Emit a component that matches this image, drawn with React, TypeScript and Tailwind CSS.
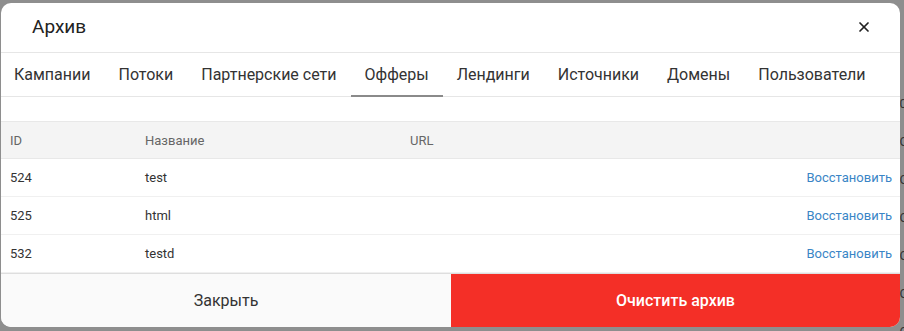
import { X } from "lucide-react";

const tabs = ["Кампании", "Потоки", "Партнерские сети", "Офферы", "Лендинги", "Источники", "Домены", "Пользователи"];

const rows = [
  { id: 524, name: "test" },
  { id: 525, name: "html" },
  { id: 532, name: "testd" },
];

export default function App() {
  return (
    <div
      className="relative w-[904px] h-[331px] overflow-hidden bg-[#8e8e8e] pt-[3px] pl-[1px]"
      style={{ fontFamily: "Roboto, 'Noto Sans', sans-serif" }}
    >
      {/* page behind the overlay, peeking out at the right edge */}
      <div className="absolute right-[-4px] top-[95px] flex flex-col gap-[20px] text-[13px] leading-[18px] text-[#333]">
        {["0", "C", "C", "C", "C", "C", "C"].map((c, i) => (
          <span key={i}>{c}</span>
        ))}
      </div>

      <div className="relative w-[899px] h-[324px] bg-white rounded-[10px] overflow-hidden flex flex-col">
        {/* Header */}
        <div className="h-[50px] flex items-center justify-between pl-[31px] pr-[28px] border-b border-[#e6e6e6]">
          <span className="text-[19px] text-[#222]">Архив</span>
          <X className="w-[16px] h-[16px] text-[#222]" strokeWidth={2.6} />
        </div>

        {/* Tabs */}
        <div className="h-[45px] flex border-b border-[#e6e6e6] -ml-px">
          {tabs.map((t) => (
            <div
              key={t}
              className={
                "px-[14px] pt-[1px] flex items-center text-[16px] text-[#333] border-b-2 -mb-px " +
                (t === "Офферы" ? "border-[#8a8a8a]" : "border-transparent")
              }
            >
              {t}
            </div>
          ))}
        </div>

        <div className="h-[24px]" />

        {/* Table */}
        <div className="flex-1 text-[13px]">
          <div className="h-[38px] flex items-center bg-[#f4f4f4] border-y border-[#e8e8e8] text-[#666]">
            <div className="w-[144px] pl-[9px]">ID</div>
            <div className="w-[265px]">Название</div>
            <div>URL</div>
          </div>
          {rows.map((r) => (
            <div key={r.id} className="h-[38px] flex items-center border-b border-[#f0f0f0] text-[#333]">
              <div className="w-[144px] pl-[9px]">{r.id}</div>
              <div className="w-[265px]">{r.name}</div>
              <div className="flex-1" />
              <div className="pr-[8px] text-[#3a85c6]">Восстановить</div>
            </div>
          ))}
        </div>

        {/* Footer */}
        <div className="h-[54px] flex border-t border-[#dedede]">
          <div className="w-[450px] flex items-center justify-center bg-[#fafafa] text-[16px] text-[#333]">
            Закрыть
          </div>
          <div className="flex-1 flex items-center justify-center bg-[#f42f27] text-[16px] font-medium text-white">
            Очистить архив
          </div>
        </div>
      </div>
    </div>
  );
}
